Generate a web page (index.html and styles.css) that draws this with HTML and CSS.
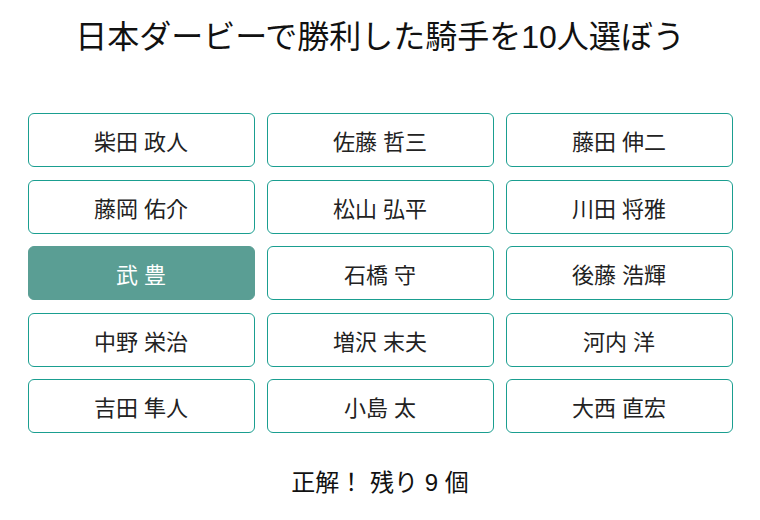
FILE: index.html
```html
<!DOCTYPE html>
<html lang="ja">
<head>
<meta charset="utf-8">
<link rel="stylesheet" href="styles.css">
</head>
<body>
<main class="app">
  <h1 class="title">日本ダービーで勝利した騎手を10人選ぼう</h1>
  <div class="grid">
    <button class="cell">柴田 政人</button>
    <button class="cell">佐藤 哲三</button>
    <button class="cell">藤田 伸二</button>
    <button class="cell">藤岡 佑介</button>
    <button class="cell">松山 弘平</button>
    <button class="cell">川田 将雅</button>
    <button class="cell selected">武 豊</button>
    <button class="cell">石橋 守</button>
    <button class="cell">後藤 浩輝</button>
    <button class="cell">中野 栄治</button>
    <button class="cell">増沢 末夫</button>
    <button class="cell">河内 洋</button>
    <button class="cell">吉田 隼人</button>
    <button class="cell">小島 太</button>
    <button class="cell">大西 直宏</button>
  </div>
  <p class="status">正解！ 残り 9 個</p>
</main>
</body>
</html>
```
FILE: styles.css
```css
* { box-sizing: border-box; }
html, body { margin: 0; padding: 0; background: #fff; }
body {
  font-family: "Liberation Sans", "Noto Sans CJK JP", sans-serif;
  color: #111;
}
.app {
  width: 705px;
  margin: 0 auto;
  display: flex;
  flex-direction: column;
  align-items: stretch;
}
.title {
  margin: 14px 0 0;
  font-size: 32px;
  font-weight: 400;
  line-height: 46px;
  text-align: center;
}
.grid {
  margin-top: 53px;
  display: grid;
  grid-template-columns: repeat(3, 1fr);
  column-gap: 12px;
  row-gap: 12.5px;
}
.cell {
  height: 54px;
  border: 1px solid #1a9e90;
  border-radius: 6px;
  background: #fff;
  font-family: inherit;
  font-size: 22px;
  color: #222;
  padding: 0;
}
.cell.selected {
  background: #5a9e94;
  border-color: #5a9e94;
  color: #fff;
}
.status {
  margin: 34px 0 0;
  text-align: center;
  font-size: 24px;
  line-height: 32px;
}
```
